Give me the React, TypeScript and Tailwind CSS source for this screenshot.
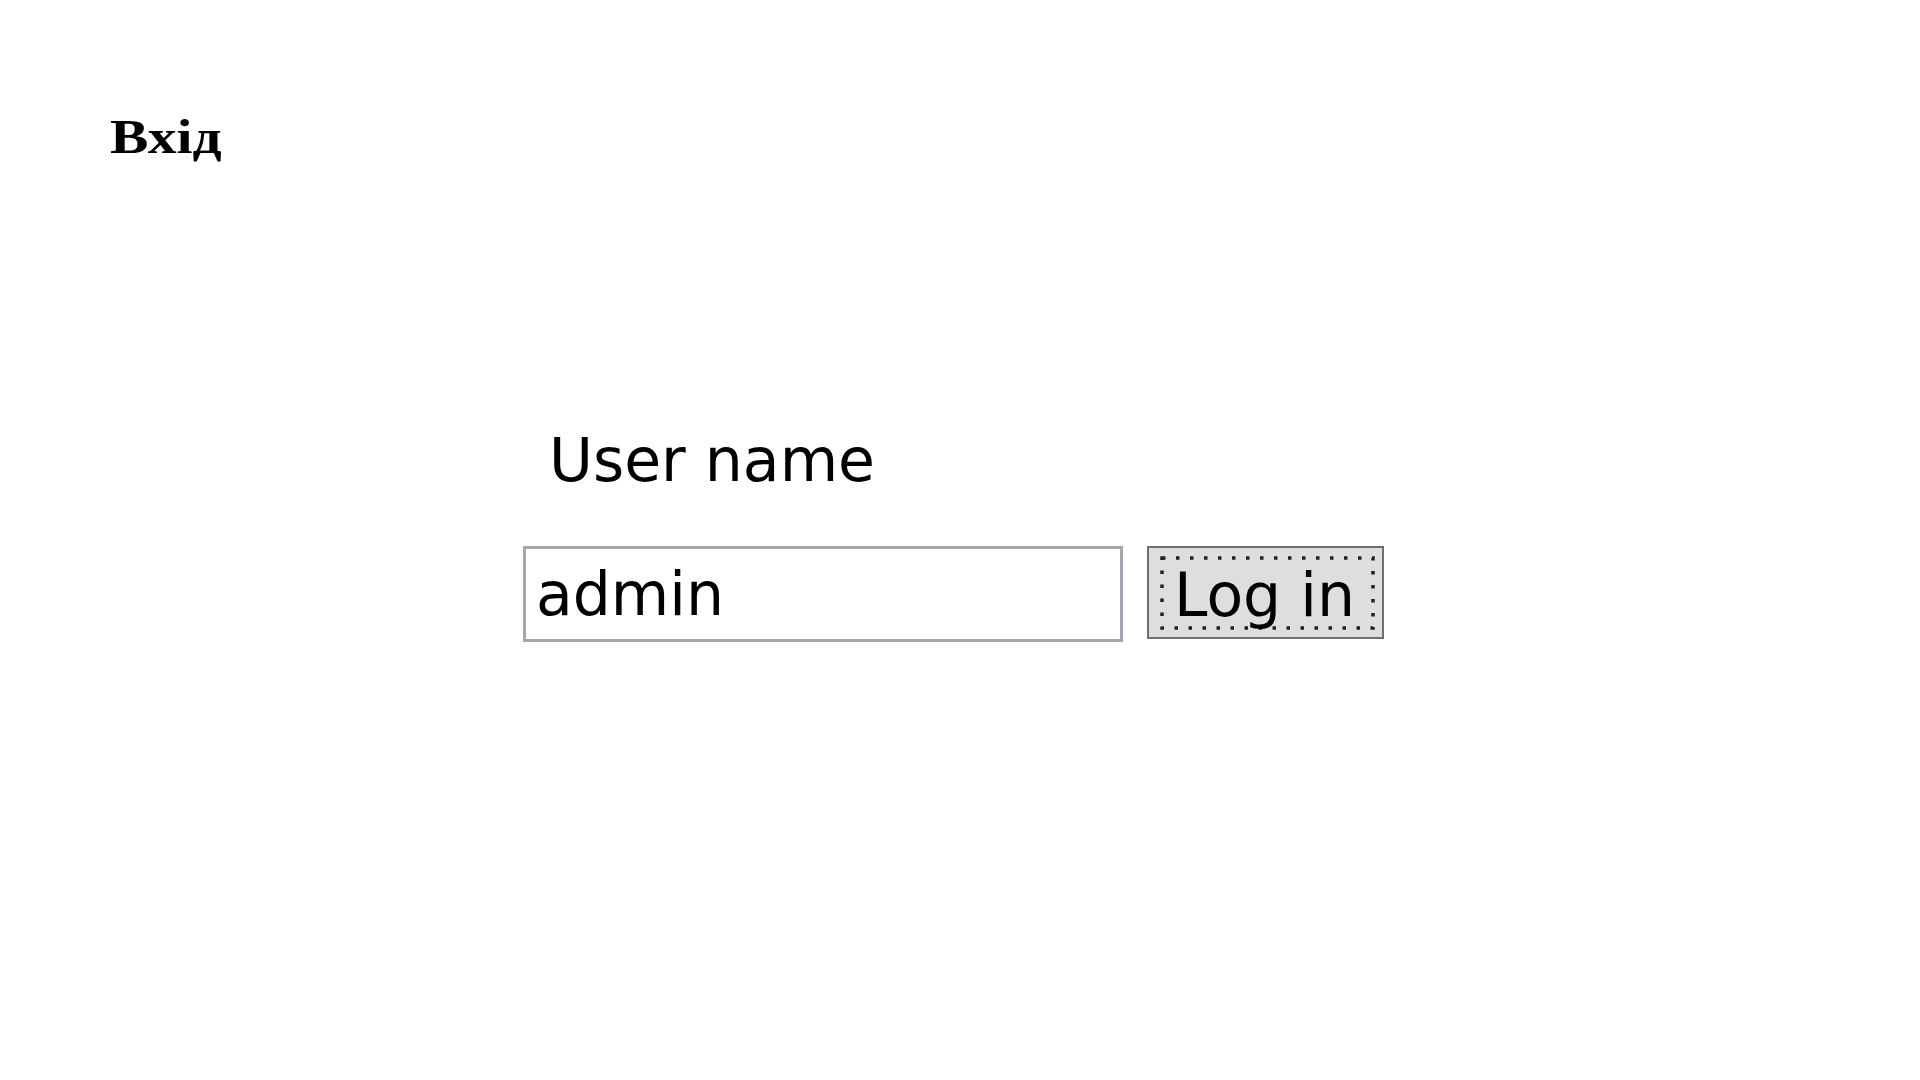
import React from "react";

export default function App() {
  return (
    <div className="min-h-screen w-full bg-white">
      <div className="flex pl-[110px] pt-[113px]">
        <h1
          className="origin-left scale-x-[1.2] text-[48px] font-bold leading-none text-black"
          style={{ fontFamily: '"Liberation Serif", "Times New Roman", serif' }}
        >
          Вхід
        </h1>
      </div>
      <div
        className="mt-[269px] pl-[523px]"
        style={{ fontFamily: '"DejaVu Sans", Verdana, sans-serif' }}
      >
        <label className="block pl-[26px] text-[60px] leading-none text-black">
          User name
        </label>
        <div className="mt-[56px] flex items-start gap-[24px]">
          <input
            readOnly
            value="admin"
            className="h-[96px] w-[600px] border-[3px] border-[#a6a6ae] bg-white pl-[10px] text-[60px] leading-none text-black outline-none"
            style={{ fontFamily: '"DejaVu Sans", Verdana, sans-serif' }}
          />
          <button
            className="relative flex h-[93px] w-[237px] items-center justify-center border-[2px] border-[#6f6f6f] bg-[#dedede] pr-[2px] pt-[4px] text-[60px] leading-none text-black"
            style={{ fontFamily: '"DejaVu Sans", Verdana, sans-serif' }}
          >
            <svg
              className="absolute left-[11px] top-[8px]"
              width="216"
              height="75"
              viewBox="0 0 216 75"
            >
              <rect
                x="2"
                y="2"
                width="211"
                height="70"
                fill="none"
                stroke="#222"
                strokeWidth="3.5"
                strokeDasharray="3.5 10.5"
              />
            </svg>
            <span className="relative">Log in</span>
          </button>
        </div>
      </div>
    </div>
  );
}
